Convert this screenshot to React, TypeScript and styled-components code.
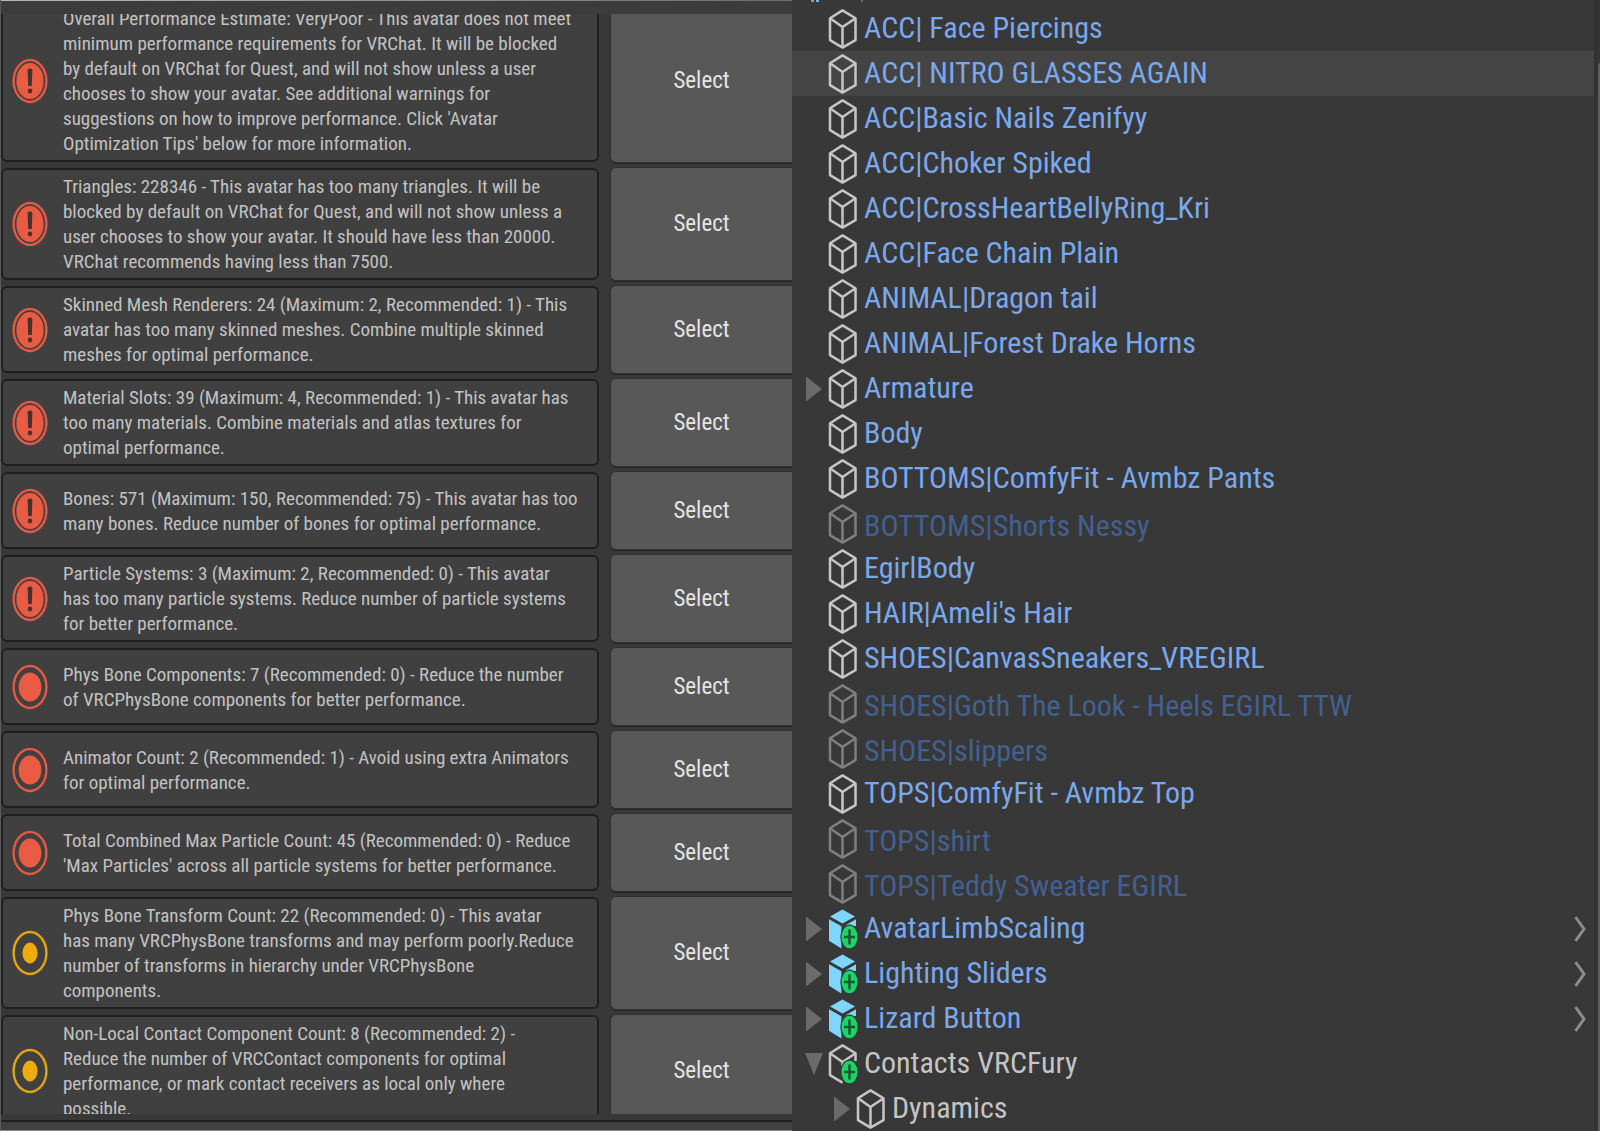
import React from "react";
import styled, { createGlobalStyle } from "styled-components";

const GlobalStyle = createGlobalStyle`
  *, *::before, *::after { box-sizing: border-box; }
  html, body { margin: 0; background: #383838; }
  body, button {
    font-family: "Roboto Condensed", Roboto, "Liberation Sans", sans-serif;
  }
  ul { list-style: none; margin: 0; padding: 0; }
  button { margin: 0; border: 0; background: none; cursor: pointer; }
`;

const Editor = styled.main`
  display: grid;
  grid-template-columns: 99fr 101fr;
  height: 100vh;
  overflow: hidden;
  background: #383838;
`;

/* ---------- validation panel ---------- */

const Validation = styled.section`
  display: flex;
  flex-direction: column;
  min-width: 0;
  min-height: 0;
  border-left: 1px solid #5a5a5a;
  border-bottom: 1px solid #8a8a8a;
  background: #383838;
`;

const PanelTop = styled.div`
  flex: none;
  height: 14px;
  border-top: 1px solid;
  border-image: linear-gradient(90deg, #b4b8b4, #6c6c6c) 1;
  background: #3c3c3c;
`;

const PanelBottom = styled.div`
  flex: none;
  height: 16px;
  background: linear-gradient(#383838 6px, #1f1f1f 6px, #1f1f1f 8px, #404040 8px);
`;

const Viewport = styled.div`
  flex: 1;
  min-height: 0;
  overflow: hidden;
`;

const IssueList = styled.ul`
  display: flex;
  flex-direction: column;
  gap: 6px;
  margin-top: -14px;
`;

const IssueRow = styled.li`
  display: grid;
  grid-template-columns: minmax(0, 598fr) minmax(0, 181fr);
  gap: 12px;
`;

const IssueBox = styled.div`
  display: flex;
  align-items: center;
  gap: 15px;
  min-height: 77px;
  padding: 4px 0 4px 9px;
  border: 2px solid #1f1f1f;
  border-radius: 6px;
  background: #404040;
`;

const IssueText = styled.p`
  margin: 0;
  color: #c2c2c2;
  font-size: 19px;
  line-height: 25px;
  white-space: pre;
`;

const SelectButton = styled.button`
  border-radius: 5px 0 0 5px;
  background: #585858;
  box-shadow: 0 0 0 1px #303030, 0 2px 0 #242424;
  color: #e4e4e4;
  font-size: 23px;
  line-height: 28px;
`;

const Badge = styled.svg`
  flex: none;
  width: 36px;
  height: 46px;
`;

type Level = "error" | "bad" | "warn";

function LevelBadge({ level }: { level: Level }) {
  const color = level === "warn" ? "#e3a50f" : "#e35943";
  return (
    <Badge viewBox="0 0 36 46" aria-hidden="true">
      <ellipse cx="18" cy="23" rx="16.4" ry="21" fill="none" stroke={color} strokeWidth="2.4" />
      {level === "error" && (
        <>
          <ellipse cx="18" cy="23" rx="13.6" ry="18" fill="#e95b43" />
          <path d="M15.6 11.5q2.4-2 4.8 0L19.8 28h-3.6z" fill="#403432" />
          <ellipse cx="18" cy="33" rx="2.3" ry="2.4" fill="#403432" />
        </>
      )}
      {level === "bad" && <ellipse cx="18" cy="23" rx="11.4" ry="14.6" fill="#e95b43" />}
      {level === "warn" && <ellipse cx="18" cy="23" rx="7.6" ry="10.4" fill="#eeab0c" />}
    </Badge>
  );
}

const issues: { level: Level; lines: string[] }[] = [
  {
    level: "error",
    lines: [
      "Overall Performance Estimate: VeryPoor - This avatar does not meet",
      "minimum performance requirements for VRChat. It will be blocked",
      "by default on VRChat for Quest, and will not show unless a user",
      "chooses to show your avatar. See additional warnings for",
      "suggestions on how to improve performance. Click 'Avatar",
      "Optimization Tips' below for more information.",
    ],
  },
  {
    level: "error",
    lines: [
      "Triangles: 228346 - This avatar has too many triangles. It will be",
      "blocked by default on VRChat for Quest, and will not show unless a",
      "user chooses to show your avatar. It should have less than 20000.",
      "VRChat recommends having less than 7500.",
    ],
  },
  {
    level: "error",
    lines: [
      "Skinned Mesh Renderers: 24 (Maximum: 2, Recommended: 1) - This",
      "avatar has too many skinned meshes. Combine multiple skinned",
      "meshes for optimal performance.",
    ],
  },
  {
    level: "error",
    lines: [
      "Material Slots: 39 (Maximum: 4, Recommended: 1) - This avatar has",
      "too many materials. Combine materials and atlas textures for",
      "optimal performance.",
    ],
  },
  {
    level: "error",
    lines: [
      "Bones: 571 (Maximum: 150, Recommended: 75) - This avatar has too",
      "many bones. Reduce number of bones for optimal performance.",
    ],
  },
  {
    level: "error",
    lines: [
      "Particle Systems: 3 (Maximum: 2, Recommended: 0) - This avatar",
      "has too many particle systems. Reduce number of particle systems",
      "for better performance.",
    ],
  },
  {
    level: "bad",
    lines: [
      "Phys Bone Components: 7 (Recommended: 0) - Reduce the number",
      "of VRCPhysBone components for better performance.",
    ],
  },
  {
    level: "bad",
    lines: [
      "Animator Count: 2 (Recommended: 1) - Avoid using extra Animators",
      "for optimal performance.",
    ],
  },
  {
    level: "bad",
    lines: [
      "Total Combined Max Particle Count: 45 (Recommended: 0) - Reduce",
      "'Max Particles' across all particle systems for better performance.",
    ],
  },
  {
    level: "warn",
    lines: [
      "Phys Bone Transform Count: 22 (Recommended: 0) - This avatar",
      "has many VRCPhysBone transforms and may perform poorly.Reduce",
      "number of transforms in hierarchy under VRCPhysBone",
      "components.",
    ],
  },
  {
    level: "warn",
    lines: [
      "Non-Local Contact Component Count: 8 (Recommended: 2) -",
      "Reduce the number of VRCContact components for optimal",
      "performance, or mark contact receivers as local only where",
      "possible.",
    ],
  },
];

/* ---------- hierarchy panel ---------- */

const Hierarchy = styled.section`
  display: flex;
  min-width: 0;
  min-height: 0;
  overflow: hidden;
`;

const TreeColumn = styled.div`
  flex: 1;
  min-width: 0;
`;

const PreviousRow = styled.svg`
  display: block;
  width: 100px;
  height: 6px;
`;

const TreeRow = styled.li<{ $depth: number; $selected?: boolean }>`
  display: flex;
  align-items: center;
  height: 45px;
  padding: 0 8px 0 ${(p) => 12 + p.$depth * 28}px;
  background: ${(p) => (p.$selected ? "#444444" : "transparent")};
`;

const Fold = styled.button`
  display: flex;
  align-items: center;
  justify-content: center;
  width: 20px;
  height: 45px;
  padding: 0;
`;

const FoldSpace = styled.span`
  width: 20px;
`;

const Glyph = styled.svg<{ $w: number; $h: number }>`
  flex: none;
  width: ${(p) => p.$w}px;
  height: ${(p) => p.$h}px;
`;

const CubeCell = styled.span<{ $dim?: boolean }>`
  display: flex;
  flex: none;
  width: 30px;
  margin: 0 6px 0 4px;
  opacity: ${(p) => (p.$dim ? 0.5 : 1)};
`;

type Tone = "prefab" | "disabled" | "plain";
const toneColor: Record<Tone, string> = {
  prefab: "#7aa8ec",
  disabled: "#43608f",
  plain: "#c4c4c4",
};

const Name = styled.span<{ $tone: Tone }>`
  flex: 1;
  padding: ${(p) => (p.$tone === "disabled" ? "4px 0 0" : "0 0 2px")};
  color: ${(p) => toneColor[p.$tone]};
  font-size: 30px;
  line-height: 36px;
  white-space: pre;
`;

const OpenButton = styled.button`
  display: flex;
  padding: 0;
`;

const Divider = styled.div`
  flex: none;
  width: 4px;
  background: #323232;
`;

const ScrollTrack = styled.div`
  flex: none;
  width: 2px;
  padding-top: 63px;
  background: #353535;
`;

const ScrollThumb = styled.div`
  height: 100%;
  border-radius: 2px 0 0 0;
  background: #5e5e5e;
`;

type CubeKind = "outline" | "outlinePlus" | "prefabPlus";

function Cube({ kind }: { kind: CubeKind }) {
  const plus = kind !== "outline";
  return (
    <Glyph $w={30} $h={40} viewBox="0 0 30 40" aria-hidden="true">
      {kind === "prefabPlus" ? (
        <g fill="#7fd6fd">
          <path d="M14.5 0.5 27 7.6 14.5 14.6 2 7.6z" />
          <path d="M1 10.2 13.4 17.2V39.4L1 31.8z" />
          <path d="M28 10.2V17L18 18.6V16z" />
        </g>
      ) : (
        <g fill="none" stroke="#c6c6c6" strokeWidth="2.5" strokeLinejoin="round">
          <path d={plus ? "M27.5 17V9.2L14.5 1.4 2 9.2V31.2L14.5 38.6" : "M14.5 1.4 27.5 9.2V31.2L14.5 38.6 2 31.2V9.2z"} />
          <path d={plus ? "M2 9.2 14.5 18 27.5 9.2M14.5 18V22" : "M2 9.2 14.5 18 27.5 9.2M14.5 18V38.6"} />
        </g>
      )}
      {plus && (
        <>
          <ellipse cx="21.5" cy="28" rx="9.2" ry="12.6" fill="#303a34" />
          <ellipse cx="21.5" cy="28" rx="8" ry="11.2" fill="#19d565" />
          <path d="M21.5 20.5V35.5M16 28H27" stroke="#1b5a30" strokeWidth="2.6" />
        </>
      )}
    </Glyph>
  );
}

type Node = {
  name: string;
  tone?: Tone;
  cube?: CubeKind;
  fold?: "closed" | "open";
  depth?: number;
  selected?: boolean;
  opens?: boolean;
};

const nodes: Node[] = [
  { name: "ACC| Face Piercings" },
  { name: "ACC| NITRO GLASSES AGAIN", selected: true },
  { name: "ACC|Basic Nails Zenifyy" },
  { name: "ACC|Choker Spiked" },
  { name: "ACC|CrossHeartBellyRing_Kri" },
  { name: "ACC|Face Chain Plain" },
  { name: "ANIMAL|Dragon tail" },
  { name: "ANIMAL|Forest Drake Horns" },
  { name: "Armature", fold: "closed" },
  { name: "Body" },
  { name: "BOTTOMS|ComfyFit - Avmbz Pants" },
  { name: "BOTTOMS|Shorts Nessy", tone: "disabled" },
  { name: "EgirlBody" },
  { name: "HAIR|Ameli's Hair" },
  { name: "SHOES|CanvasSneakers_VREGIRL" },
  { name: "SHOES|Goth The Look - Heels EGIRL TTW", tone: "disabled" },
  { name: "SHOES|slippers", tone: "disabled" },
  { name: "TOPS|ComfyFit - Avmbz Top" },
  { name: "TOPS|shirt", tone: "disabled" },
  { name: "TOPS|Teddy Sweater EGIRL", tone: "disabled" },
  { name: "AvatarLimbScaling", cube: "prefabPlus", fold: "closed", opens: true },
  { name: "Lighting Sliders", cube: "prefabPlus", fold: "closed", opens: true },
  { name: "Lizard Button", cube: "prefabPlus", fold: "closed", opens: true },
  { name: "Contacts VRCFury", cube: "outlinePlus", fold: "open", tone: "plain" },
  { name: "Dynamics", fold: "closed", depth: 1, tone: "plain" },
];

function TreeItem({ node }: { node: Node }) {
  const { name, tone = "prefab", cube = "outline", fold, depth = 0, selected, opens } = node;
  return (
    <TreeRow $depth={depth} $selected={selected}>
      {fold ? (
        <Fold aria-label={`Toggle ${name}`} aria-expanded={fold === "open"}>
          <Glyph $w={18} $h={26} viewBox="0 0 18 26" aria-hidden="true">
            <path d={fold === "open" ? "M0 2H18L9 24z" : "M1 0.5V25.5L17 13z"} fill="#6b6b6b" />
          </Glyph>
        </Fold>
      ) : (
        <FoldSpace />
      )}
      <CubeCell $dim={tone === "disabled"}>
        <Cube kind={cube} />
      </CubeCell>
      <Name $tone={tone}>{name}</Name>
      {opens && (
        <OpenButton aria-label={`Open ${name}`}>
          <Glyph $w={12} $h={26} viewBox="0 0 12 26" aria-hidden="true">
            <path d="M1.5 1 10 13 1.5 25" fill="none" stroke="#8c8c8c" strokeWidth="3" />
          </Glyph>
        </OpenButton>
      )}
    </TreeRow>
  );
}

export default function App() {
  return (
    <>
      <GlobalStyle />
      <Editor>
        <Validation aria-label="Avatar validation">
          <PanelTop />
          <Viewport>
            <IssueList>
              {issues.map((issue) => (
                <IssueRow key={issue.lines[0]}>
                  <IssueBox>
                    <LevelBadge level={issue.level} />
                    <IssueText>{issue.lines.join("\n")}</IssueText>
                  </IssueBox>
                  <SelectButton>Select</SelectButton>
                </IssueRow>
              ))}
            </IssueList>
          </Viewport>
          <PanelBottom />
        </Validation>
        <Hierarchy aria-label="Hierarchy">
          <TreeColumn>
            <PreviousRow viewBox="0 0 100 6" aria-hidden="true">
              <path d="M19 0H22V2H19z" fill="#9a9a9a" />
              <path d="M24 0H27V2H24z" fill="#6fb9d9" />
              <path d="M69 0H71V2H69z" fill="#4f6c98" />
            </PreviousRow>
            <ul>
              {nodes.map((node) => (
                <TreeItem key={node.name} node={node} />
              ))}
            </ul>
          </TreeColumn>
          <Divider />
          <ScrollTrack>
            <ScrollThumb />
          </ScrollTrack>
        </Hierarchy>
      </Editor>
    </>
  );
}
